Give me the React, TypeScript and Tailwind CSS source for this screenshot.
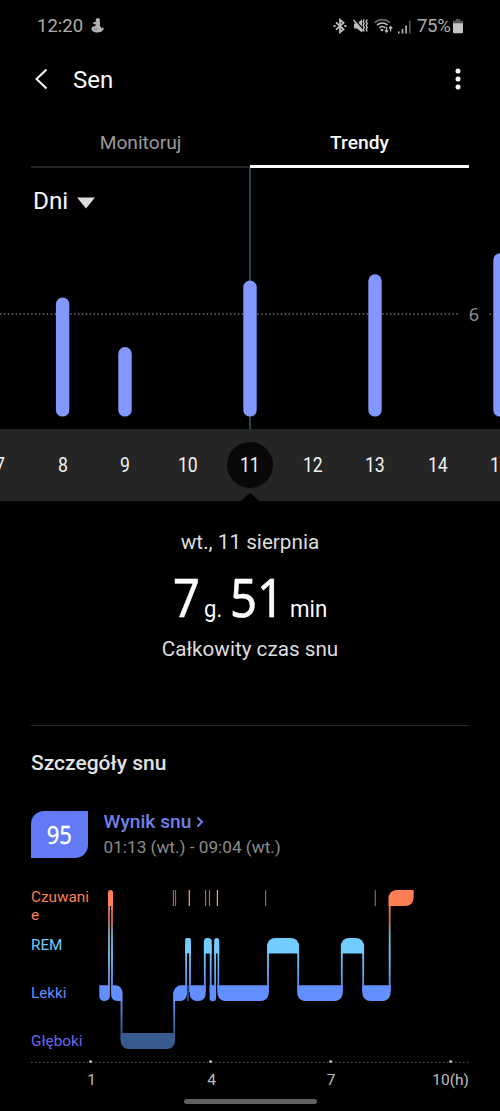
const days = ['7', '8', '9', '10', '11', '12', '13', '14', '15']

// center x and top y of each bar, the baseline is shared
const bars = [
  { x: 62.6, y: 129.6 },
  { x: 125, y: 179 },
  { x: 250, y: 112.6 },
  { x: 375, y: 106.2 },
  { x: 500, y: 85.2 },
]

const awakeTicks = [
  { x: 173.4, o: 0.6 },
  { x: 175.5, o: 0.6 },
  { x: 189.3, o: 1 },
  { x: 205.6, o: 0.65 },
  { x: 209.5, o: 0.65 },
  { x: 217.4, o: 1 },
  { x: 265.6, o: 0.6 },
  { x: 375.3, o: 0.6 },
]

function StatusBar() {
  return (
    <div className="flex h-[50px] items-center pl-[37px] pr-[37px] pt-[3px] text-[18.500px] text-[#adadad]">
      <span>12:20</span>
      <svg className="ml-[8px] -mt-[2px]" width="13" height="15" viewBox="0 0 13 15" fill="#b4b4b4">
        <circle cx="6.9" cy="2.2" r="2.1" />
        <path d="M5.2 3.6h3.2c.9 1.500.8 2.900.3 3.900 1.100 1 1.700 1.900 1.800 2.900l1.300-.9 1 .8c-.3 2.200-2.300 4.200-6.300 4.200C3 14.500.6 13 .5 10.800c.1-1.300.8-2 1.900-2.200L4 8.300 5 6.700 2 5.600l.2-1z" />
        <path d="M2.800 10.500l2 1.100 1.600-.8" stroke="#444" strokeWidth=".6" fill="none" />
      </svg>
      <div className="ml-auto flex items-center">
        {/* bluetooth */}
        <svg className="mr-[6px] -mt-[2px]" width="14" height="16" viewBox="0 0 14 16" fill="none" stroke="#bdbdbd" strokeWidth="1.800">
          <path d="M3 4.300l7.600 7L7 14.300V1.700l3.600 3L3 11.700" />
          <path d="M.6 8h2M11.400 8h2" strokeWidth="2" />
        </svg>
        {/* muted, vibrating */}
        <svg className="mr-[5px] -mt-[2px]" width="16" height="16" viewBox="0 0 16 16" fill="none" stroke="#bdbdbd">
          <path d="M1 5.500h3l5-4v13l-5-4H1z" fill="#bdbdbd" stroke="none" />
          <path d="M1.500 1l9.500 11" stroke="#000" strokeWidth="1.200" />
          <path d="M.5 2l9.500 11" strokeWidth="1.500" />
          <path d="M11.200 1.500l-1 2 1 2-1 2 1 2-1 2 1 2M14.200 1.500l-1 2 1 2-1 2 1 2-1 2 1 2" strokeWidth="1.500" />
        </svg>
        {/* wifi */}
        <svg className="mr-[5px] -mt-[2px]" width="19" height="16" viewBox="0 0 19 16" fill="none" stroke="#bdbdbd" strokeWidth="1.600">
          <path d="M.8 4.800c4-4.300 11-4.300 15 0" stroke="#666" />
          <path d="M3 7.300c3-3 7.600-3 10.600 0M5.300 9.900c1.800-1.700 4.200-1.700 6 0" />
          <circle cx="8" cy="12" r="1.300" fill="#bdbdbd" stroke="none" />
          <path d="M12.500 9v5M10.900 12.300l1.600 1.800 1.600-1.800M16.600 13.500V8.700M15 10.500l1.600-1.800 1.600 1.800" strokeWidth="1.200" />
        </svg>
        {/* signal */}
        <svg className="mr-[6px]" width="13" height="16" viewBox="0 0 13 16" fill="#bdbdbd">
          <path d="M0 12.500h1.600v2H0zM3.700 10h1.600v4.500H3.700zM7.300 6.500h1.600v8H7.300z" />
          <path d="M11 1.800h1.600v12.700H11z" fill="#555" />
        </svg>
        <span className="w-[36px] whitespace-nowrap tracking-[-0.3px]">75%</span>
        {/* battery */}
        <svg className="-mt-[2px]" width="10" height="16" viewBox="0 0 10 16">
          <path d="M2.800 1h4.400v1.700H10v3H0v-3h2.800z" fill="#555" />
          <path d="M0 5.300h10v9a1 1 0 0 1-1 1H1a1 1 0 0 1-1-1z" fill="#c4c4c4" />
        </svg>
      </div>
    </div>
  )
}

function Header() {
  return (
    <div className="flex h-[60px] items-center pl-[34px] pr-[38px] text-[24px] text-[#fafafa]">
      <svg className="-mt-[3px]" width="14" height="22" viewBox="0 0 14 22" fill="none" stroke="#fafafa" strokeWidth="2">
        <path d="M12.500 1.500L2.500 11l10 9.500" />
      </svg>
      <h1 className="ml-[25px]">Sen</h1>
      <svg className="ml-auto -mt-[2px] mr-[1px]" width="6" height="22" viewBox="0 0 6 22" fill="#fafafa">
        <circle cx="3" cy="3" r="2.500" />
        <circle cx="3" cy="11" r="2.500" />
        <circle cx="3" cy="19" r="2.500" />
      </svg>
    </div>
  )
}

function Tabs() {
  return (
    <div className="mx-[31px] flex h-[58px] items-end text-center text-[19.200px]">
      <div className="h-[39px] flex-1 border-b-2 border-[#242424] text-[#9a9a9a]">Monitoruj</div>
      <div className="h-[39px] flex-1 border-b-[3px] border-[#fafafa] font-medium text-[#fafafa]">Trendy</div>
    </div>
  )
}

function TrendChart() {
  return (
    <div className="relative h-[261px]">
      <svg width="500" height="261" viewBox="0 0 500 261">
        <path d="M250 0v261" stroke="#31535f" strokeWidth="1.600" />
        <path d="M0 146H460M489.500 146h2" stroke="#747474" strokeWidth="1.300" strokeDasharray="1.400 2.500" />
        {bars.map((b) => (
          <rect key={b.x} x={b.x - 6.7} y={b.y} width="13.400" height={248.6 - b.y} rx="6.700" fill="#8297ff" />
        ))}
        <text x="474" y="152.500" textAnchor="middle" fontSize="18" fill="#8c8c8c" className="font-['Noto_Sans',sans-serif]">6</text>
      </svg>
      {/* period picker lies over the chart */}
      <button className="absolute left-[33px] top-[15px] flex items-center text-[24.300px] leading-[36px] text-[#fafafa]">
        Dni
        <svg className="ml-[9px] mt-[3px]" width="18" height="12" viewBox="0 0 18 12">
          <path d="M0 .5h18L9 11.500z" fill="#dcdcdc" />
        </svg>
      </button>
    </div>
  )
}

function DayStrip() {
  return (
    <div className="relative flex h-[72px] justify-center overflow-hidden bg-[#252525] text-[21px] text-[#f2f2f2]">
      {days.map((d) => (
        <div key={d} className="flex w-[62.500px] shrink-0 items-center justify-center">
          <span className={d === '11' ? 'flex size-[46px] items-center justify-center rounded-full bg-[#080808]' : ''}>
            <span className="inline-block scale-x-[0.84] pt-[2px]">{d}</span>
          </span>
        </div>
      ))}
      <svg className="absolute bottom-0 left-[241px]" width="18" height="8" viewBox="0 0 18 8">
        <path d="M0 8L8 .6q1-.8 2 0L18 8z" fill="#000" />
      </svg>
    </div>
  )
}

function Summary() {
  return (
    <div className="flex h-[224px] flex-col items-center pt-[26px] text-[#dedede]">
      <p className="text-[20.700px] leading-[30px]">wt., 11 sierpnia</p>
      <div className="flex h-[77px] items-baseline pt-[2px] text-[24.500px] leading-[76px] text-[#fafafa]">
        <span className="w-[31.500px] origin-left scale-x-[0.9] font-['Noto_Sans',sans-serif] text-[52px] [-webkit-text-stroke:0.6px]">7</span>
        <span className="w-[26px] origin-left scale-x-[0.9]">g.</span>
        <span className="w-[59.500px] origin-left scale-x-[0.91] font-['Noto_Sans',sans-serif] text-[52px] [-webkit-text-stroke:0.6px]">51</span>
        <span className="w-[38px] origin-left scale-x-[0.91]">min</span>
      </div>
      <p className="text-[20.700px] leading-[30px]">Całkowity czas snu</p>
    </div>
  )
}

function Score() {
  return (
    <div className="mt-[32px] flex h-[48px]">
      <div className="flex h-[47px] w-[57px] items-center justify-center rounded-tl-[13px] rounded-br-[13px] bg-[#637af5] font-['Noto_Sans',sans-serif] text-[25px] text-white">
        <span className="inline-block scale-x-[0.88] [-webkit-text-stroke:0.3px]">95</span>
      </div>
      <div className="ml-[15.500px] -mt-[3px]">
        <div className="flex items-center text-[19.200px] leading-[27px] font-medium text-[#6f80ea]">
          Wynik snu
          <svg className="ml-[5px]" width="8" height="12" viewBox="0 0 8 12" fill="none" stroke="#6f80ea" strokeWidth="2">
            <path d="M1.500 1.500L6 6l-4.500 4.500" />
          </svg>
        </div>
        <div className="text-[17.200px] leading-[24px] text-[#8c8c8c]">01:13 (wt.) - 09:04 (wt.)</div>
      </div>
    </div>
  )
}

function Hypnogram() {
  return (
    <div className="mt-[27px] flex h-[168px]">
      <div className="w-[64px] text-[15.300px] leading-[18px]">
        <div className="h-[48px] pt-[2px] text-[#ff7e54]">Czuwani<br />e</div>
        <div className="h-[48px] pt-[2px] text-[#74cbff]">REM</div>
        <div className="h-[48px] pt-[2px] text-[#668dff]">Lekki</div>
        <div className="h-[24px] pt-[2px] text-[#6868ee]">Głęboki</div>
      </div>
      <svg width="374" height="168" viewBox="95 886 374 168">
        <defs>
          <linearGradient id="stage" gradientUnits="userSpaceOnUse" x1="0" y1="890" x2="0" y2="1049">
            <stop offset="0.090" stopColor="#ff7e54" />
            <stop offset="0.180" stopColor="#dd6448" />
            <stop offset="0.290" stopColor="#6bb5d0" />
            <stop offset="0.400" stopColor="#70c8fb" />
            <stop offset="0.620" stopColor="#5c88ea" />
            <stop offset="0.700" stopColor="#628fff" />
            <stop offset="0.900" stopColor="#395a8e" />
          </linearGradient>
        </defs>
        {/* connectors between stages */}
        <path
          d="M109 894V990M112 894V990M121.500 992v48M174.200 992v48M186.100 944v48M190 944v48M204.800 944v48M210.700 944v48M215.100 944v48M218.300 944v48M268 944v48M298.200 944v48M341.800 944v48M363.200 944v48M389.700 896v96"
          stroke="url(#stage)"
          strokeWidth="1.800"
        />
        {/* awake */}
        <g fill="#ff7e54">
          <path d="M108 906V892.500a2.500 2.500 0 0 1 5 0V906z" />
          <path d="M388.600 906V898a8 8 0 0 1 8-8H413.600V898a8 8 0 0 1-8 8z" />
          {awakeTicks.map((t) => (
            <rect key={t.x} x={t.x - 0.6} y="890" width="1.200" height="16" opacity={t.o} fill="#ff9e7e" />
          ))}
        </g>
        {/* REM */}
        <g fill="#74cbff">
          <path d="M185.200 953.500V939.500a1.500 1.500 0 0 1 1.500-1.500h2.700a1.500 1.500 0 0 1 1.500 1.500v14z" />
          <path d="M203.900 953.500V941.500a3.500 3.500 0 0 1 3.500-3.500h.8a3.500 3.500 0 0 1 3.500 3.500v12z" />
          <path d="M214.200 953.500V940.500a2.500 2.500 0 0 1 5 0v13z" />
          <path d="M267.100 953.500V946a8 8 0 0 1 8-8H291a8 8 0 0 1 8 8v7.500z" />
          <path d="M340.900 953.500V946a8 8 0 0 1 8-8H356a8 8 0 0 1 8 8v7.500z" />
        </g>
        {/* light */}
        <g fill="#628fff">
          <path d="M99.300 985.300H109.900V996a5 5 0 0 1-5 5h-1a5 5 0 0 1-4.600-5z" />
          <path d="M111.100 985.300h4.200a7 7 0 0 1 7 7V1001H117a6 6 0 0 1-5.900-6z" />
          <path d="M173.300 1001V993.300a8 8 0 0 1 8-8H187V994a7 7 0 0 1-6 7z" />
          <path d="M187.300 985.300h1.300V1001h-1.300z" opacity=".65" />
          <path d="M189.800 985.300H205.600V994a7 7 0 0 1-7 7h-2a7 7 0 0 1-6.800-7z" />
          <path d="M209.600 985.300h6.500V998a3.200 3.200 0 0 1-6.500 0z" />
          <path d="M217.400 985.300H268.900V993a8 8 0 0 1-8 8H225.400a8 8 0 0 1-8-8z" />
          <path d="M297.200 985.300H342.700V993a8 8 0 0 1-8 8H305.200a8 8 0 0 1-8-8z" />
          <path d="M362.300 985.300H390.600V993a8 8 0 0 1-8 8H370.300a8 8 0 0 1-8-8z" />
        </g>
        {/* deep */}
        <path d="M120.700 1033H175V1041a8 8 0 0 1-8 8H128.700a8 8 0 0 1-8-8z" fill="#395a8e" />
        {/* gap inside the narrow spikes */}
        <path d="M110.500 906V986M188 953.500V985M216.800 953.500V985" stroke="#000" strokeWidth=".9" />
      </svg>
    </div>
  )
}

function TimeAxis() {
  return (
    <div className="-mr-px h-[45px]">
      <svg width="438" height="9" viewBox="0 0 438 9">
        <path d="M0 8.400H438" stroke="#4a4a4a" strokeWidth="1.200" strokeDasharray="1.500 2.500" />
        {[59.6, 179.6, 299.7, 419.7].map((x) => (
          <circle key={x} cx={x} cy="7.500" r="1.500" fill="#b5b5b5" />
        ))}
      </svg>
      <div className="grid grid-cols-[121px_119px_120px_78px] pt-[6px] text-[15.500px] leading-[22px] text-[#bdbdbd]">
        <span className="text-center">1</span>
        <span className="text-center">4</span>
        <span className="text-center">7</span>
        <span className="text-right">10(h)</span>
      </div>
    </div>
  )
}

export default function App() {
  return (
    <div className="h-[1111px] w-[500px] overflow-hidden bg-black font-[Roboto,sans-serif]">
      <StatusBar />
      <Header />
      <Tabs />
      <TrendChart />
      <DayStrip />
      <Summary />
      <section className="mx-[31px] border-t border-[#2b2b2b] pt-[22px]">
        <h2 className="text-[21px] leading-[31px] font-medium text-[#e2e2e2]">Szczegóły snu</h2>
        <Score />
        <Hypnogram />
        <TimeAxis />
      </section>
      {/* gesture bar */}
      <div className="mx-auto h-[5px] w-[133px] rounded-full bg-[#606060]" />
    </div>
  )
}
